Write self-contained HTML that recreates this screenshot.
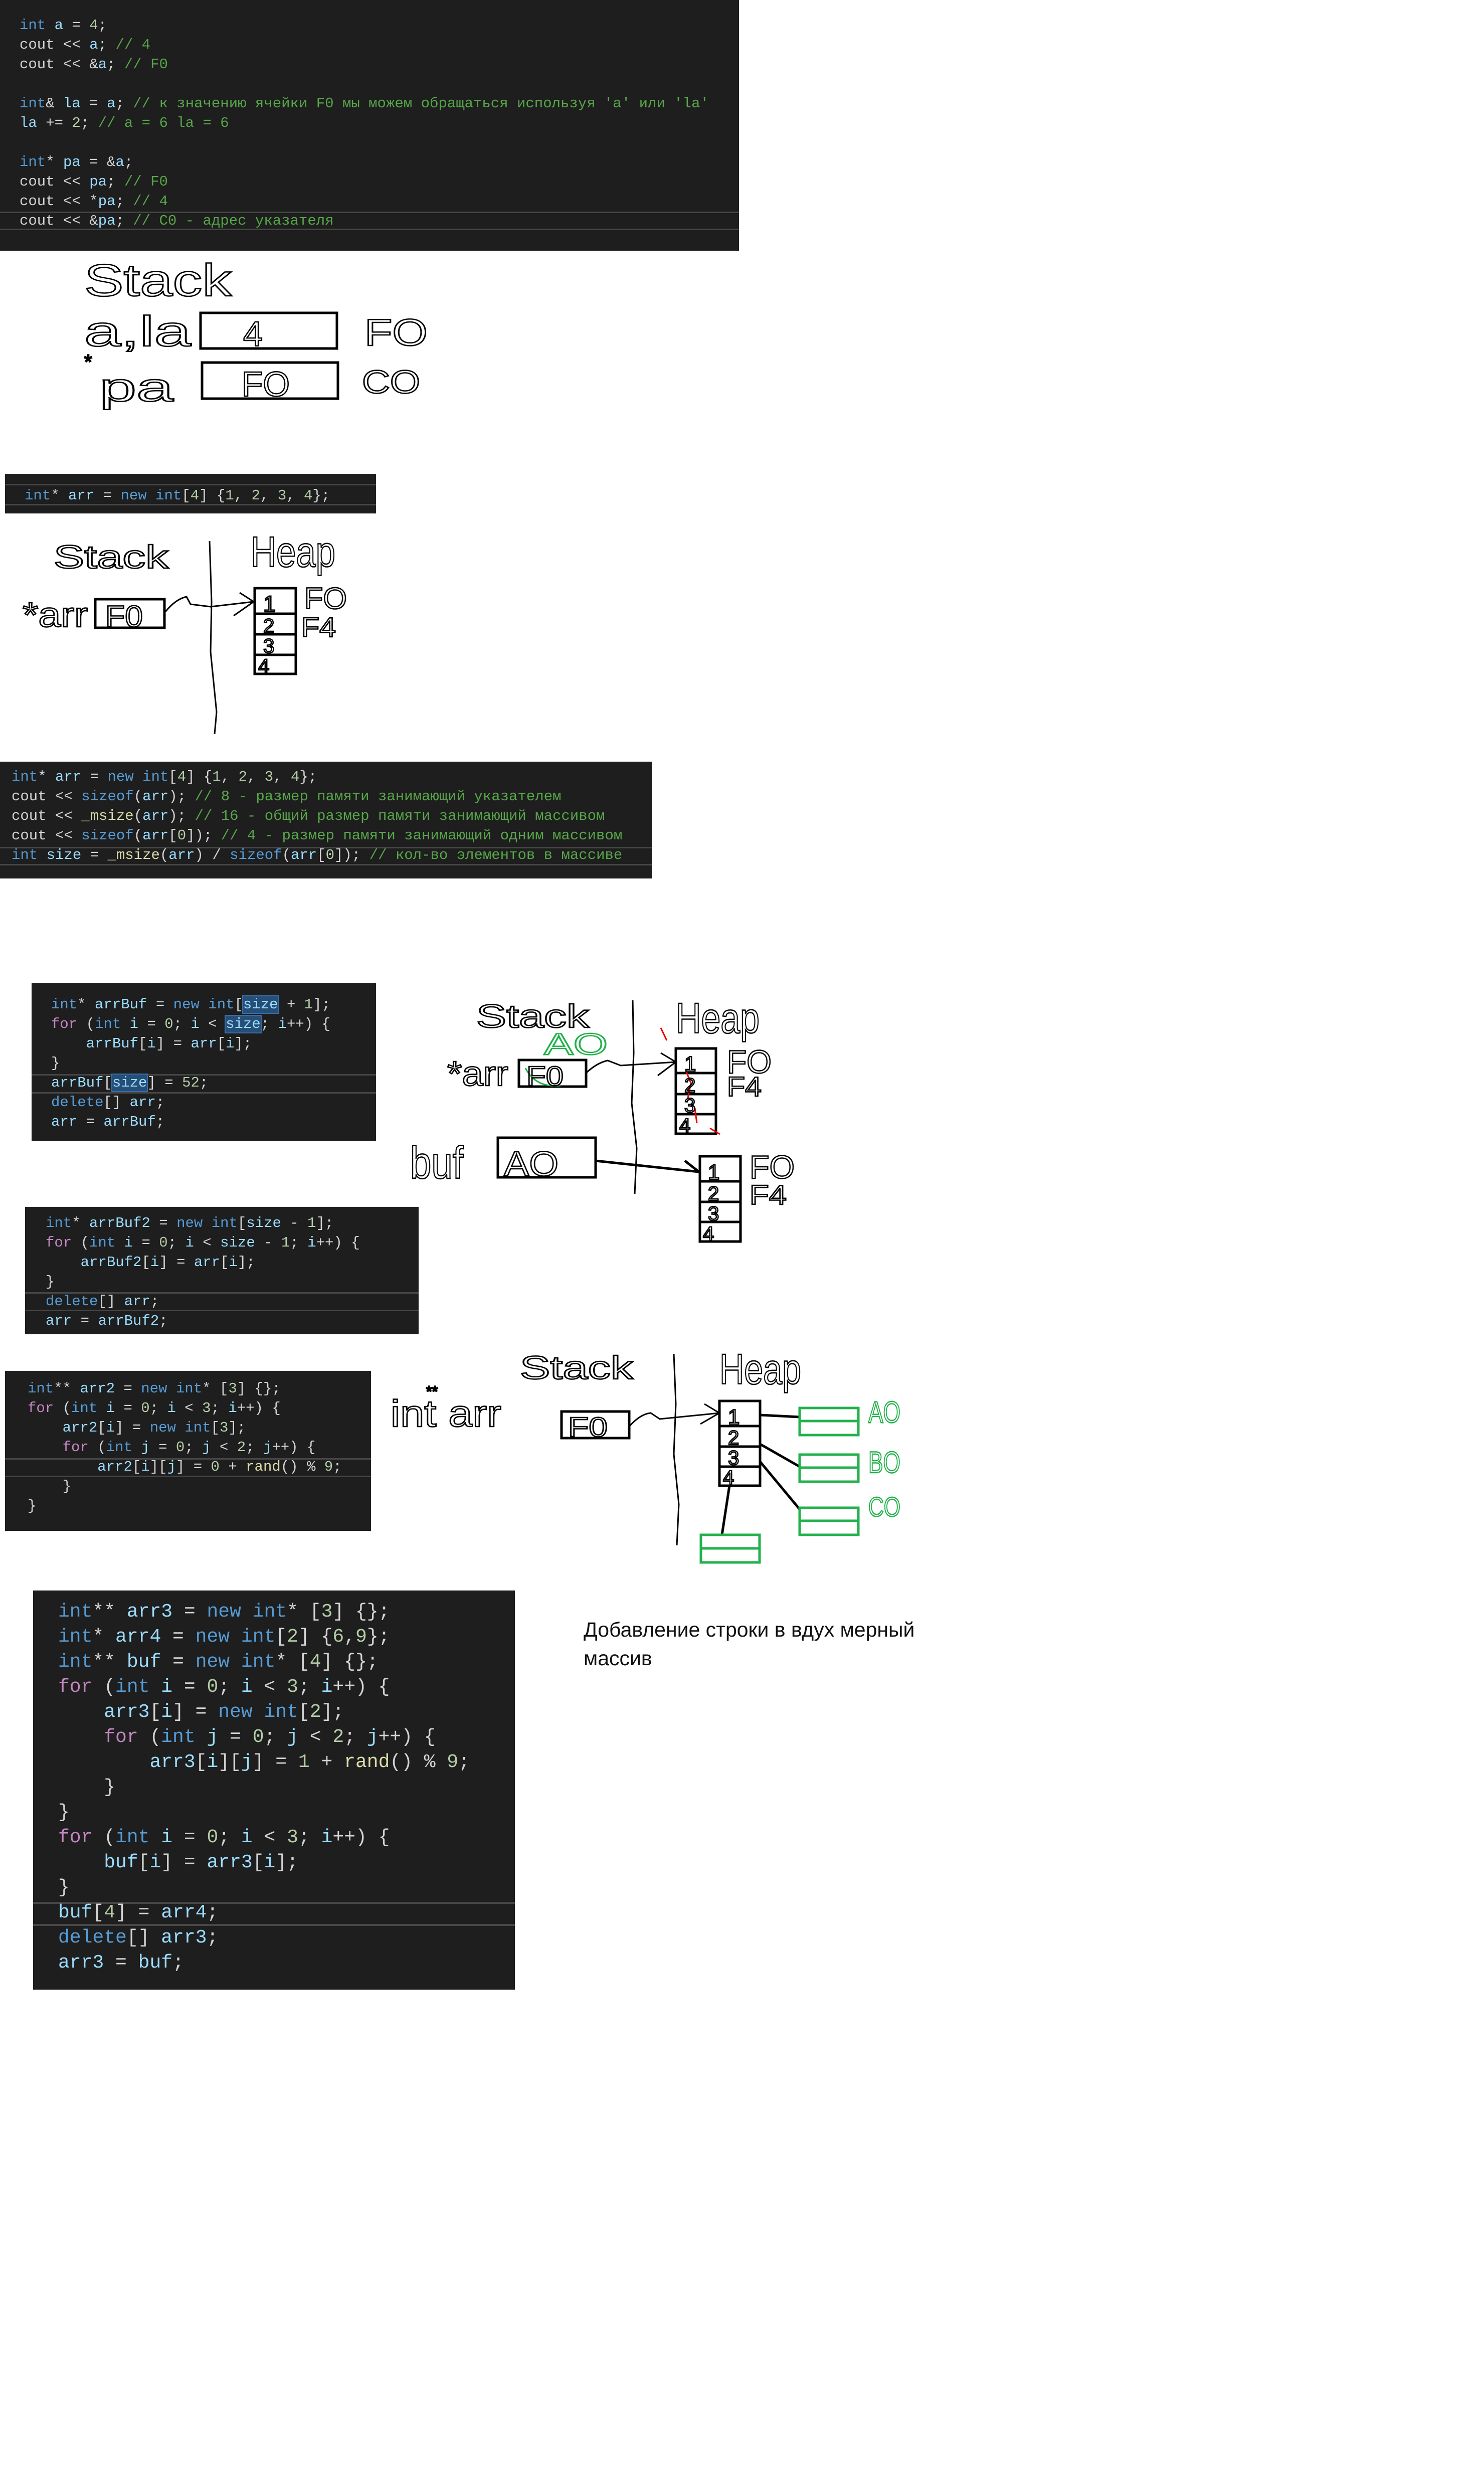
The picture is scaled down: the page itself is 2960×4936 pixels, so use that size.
<!DOCTYPE html>
<html><head><meta charset="utf-8">
<style>
html,body{margin:0;padding:0;background:#fff;}
body{width:2960px;height:4936px;position:relative;overflow:hidden;}
.blk{position:absolute;background:#1e1e1e;}
.blk pre{position:absolute;margin:0;font-family:"Liberation Mono","DejaVu Sans Mono",monospace;font-size:29px;line-height:39px;color:#d4d4d4;white-space:pre;}
.hl{position:absolute;left:0;right:0;height:3px;background:#464646;}
.k{color:#569cd6}.v{color:#9cdcfe}.c{color:#57a64a}.n{color:#b5cea8}.f{color:#dcdcaa}.p{color:#c586c0}
.s{background:#264f78;outline:2px solid #3a6ea5}
svg{position:absolute;left:0;top:0;}
.hw{font-family:"Liberation Sans Narrow","Liberation Sans",sans-serif;font-weight:normal;fill:none;stroke:#000;stroke-width:2.5;}
.hg{font-family:"Liberation Sans Narrow","Liberation Sans",sans-serif;fill:none;stroke:#22b14c;stroke-width:2.5;}
.ru{position:absolute;left:1164px;top:3222px;font-family:"Liberation Sans",sans-serif;font-size:41px;line-height:57px;color:#111;}
</style></head><body>

<div class="blk" style="left:0;top:0;width:1474px;height:500px;">
<div class="hl" style="top:422px"></div><div class="hl" style="top:456px"></div>
<pre style="left:39px;top:31px"><span class="k">int</span> <span class="v">a</span> = <span class="n">4</span>;
cout &lt;&lt; <span class="v">a</span>; <span class="c">// 4</span>
cout &lt;&lt; &amp;<span class="v">a</span>; <span class="c">// F0</span>

<span class="k">int</span>&amp; <span class="v">la</span> = <span class="v">a</span>; <span class="c">// к значению ячейки F0 мы можем обращаться используя 'a' или 'la'</span>
<span class="v">la</span> += <span class="n">2</span>; <span class="c">// a = 6 la = 6</span>

<span class="k">int</span>* <span class="v">pa</span> = &amp;<span class="v">a</span>;
cout &lt;&lt; <span class="v">pa</span>; <span class="c">// F0</span>
cout &lt;&lt; *<span class="v">pa</span>; <span class="c">// 4</span>
cout &lt;&lt; &amp;<span class="v">pa</span>; <span class="c">// C0 - адрес указателя</span></pre>
</div>

<div class="blk" style="left:10px;top:945px;width:740px;height:79px;">
<div class="hl" style="top:20px"></div><div class="hl" style="top:60px"></div>
<pre style="left:39px;top:24px"><span class="k">int</span>* <span class="v">arr</span> = <span class="k">new</span> <span class="k">int</span>[<span class="n">4</span>] {<span class="n">1</span>, <span class="n">2</span>, <span class="n">3</span>, <span class="n">4</span>};</pre>
</div>

<div class="blk" style="left:0;top:1519px;width:1300px;height:233px;">
<div class="hl" style="top:170px"></div><div class="hl" style="top:204px"></div>
<pre style="left:23px;top:11px"><span class="k">int</span>* <span class="v">arr</span> = <span class="k">new</span> <span class="k">int</span>[<span class="n">4</span>] {<span class="n">1</span>, <span class="n">2</span>, <span class="n">3</span>, <span class="n">4</span>};
cout &lt;&lt; <span class="k">sizeof</span>(<span class="v">arr</span>); <span class="c">// 8 - размер памяти занимающий указателем</span>
cout &lt;&lt; <span class="f">_msize</span>(<span class="v">arr</span>); <span class="c">// 16 - общий размер памяти занимающий массивом</span>
cout &lt;&lt; <span class="k">sizeof</span>(<span class="v">arr</span>[<span class="n">0</span>]); <span class="c">// 4 - размер памяти занимающий одним массивом</span>
<span class="k">int</span> <span class="v">size</span> = <span class="f">_msize</span>(<span class="v">arr</span>) / <span class="k">sizeof</span>(<span class="v">arr</span>[<span class="n">0</span>]); <span class="c">// кол-во элементов в массиве</span></pre>
</div>

<div class="blk" style="left:63px;top:1960px;width:687px;height:316px;">
<div class="hl" style="top:182px"></div><div class="hl" style="top:218px"></div>
<pre style="left:39px;top:24px"><span class="k">int</span>* <span class="v">arrBuf</span> = <span class="k">new</span> <span class="k">int</span>[<span class="v s">size</span> + <span class="n">1</span>];
<span class="p">for</span> (<span class="k">int</span> <span class="v">i</span> = <span class="n">0</span>; <span class="v">i</span> &lt; <span class="v s">size</span>; <span class="v">i</span>++) {
    <span class="v">arrBuf</span>[<span class="v">i</span>] = <span class="v">arr</span>[<span class="v">i</span>];
}
<span class="v">arrBuf</span>[<span class="v s">size</span>] = <span class="n">52</span>;
<span class="k">delete</span>[] <span class="v">arr</span>;
<span class="v">arr</span> = <span class="v">arrBuf</span>;</pre>
</div>

<div class="blk" style="left:50px;top:2407px;width:785px;height:254px;">
<div class="hl" style="top:170px"></div><div class="hl" style="top:205px"></div>
<pre style="left:41px;top:13px"><span class="k">int</span>* <span class="v">arrBuf2</span> = <span class="k">new</span> <span class="k">int</span>[<span class="v">size</span> - <span class="n">1</span>];
<span class="p">for</span> (<span class="k">int</span> <span class="v">i</span> = <span class="n">0</span>; <span class="v">i</span> &lt; <span class="v">size</span> - <span class="n">1</span>; <span class="v">i</span>++) {
    <span class="v">arrBuf2</span>[<span class="v">i</span>] = <span class="v">arr</span>[<span class="v">i</span>];
}
<span class="k">delete</span>[] <span class="v">arr</span>;
<span class="v">arr</span> = <span class="v">arrBuf2</span>;</pre>
</div>

<div class="blk" style="left:10px;top:2734px;width:730px;height:319px;">
<div class="hl" style="top:174px"></div><div class="hl" style="top:209px"></div>
<pre style="left:45px;top:16px"><span class="k">int</span>** <span class="v">arr2</span> = <span class="k">new</span> <span class="k">int</span>* [<span class="n">3</span>] {};
<span class="p">for</span> (<span class="k">int</span> <span class="v">i</span> = <span class="n">0</span>; <span class="v">i</span> &lt; <span class="n">3</span>; <span class="v">i</span>++) {
    <span class="v">arr2</span>[<span class="v">i</span>] = <span class="k">new</span> <span class="k">int</span>[<span class="n">3</span>];
    <span class="p">for</span> (<span class="k">int</span> <span class="v">j</span> = <span class="n">0</span>; <span class="v">j</span> &lt; <span class="n">2</span>; <span class="v">j</span>++) {
        <span class="v">arr2</span>[<span class="v">i</span>][<span class="v">j</span>] = <span class="n">0</span> + <span class="f">rand</span>() % <span class="n">9</span>;
    }
}</pre>
</div>

<div class="blk" style="left:66px;top:3172px;width:961px;height:796px;">
<div class="hl" style="top:621px;height:4px"></div><div class="hl" style="top:665px;height:4px"></div>
<pre style="left:50px;top:18px;font-size:38px;line-height:50px;"><span class="k">int</span>** <span class="v">arr3</span> = <span class="k">new</span> <span class="k">int</span>* [<span class="n">3</span>] {};
<span class="k">int</span>* <span class="v">arr4</span> = <span class="k">new</span> <span class="k">int</span>[<span class="n">2</span>] {<span class="n">6</span>,<span class="n">9</span>};
<span class="k">int</span>** <span class="v">buf</span> = <span class="k">new</span> <span class="k">int</span>* [<span class="n">4</span>] {};
<span class="p">for</span> (<span class="k">int</span> <span class="v">i</span> = <span class="n">0</span>; <span class="v">i</span> &lt; <span class="n">3</span>; <span class="v">i</span>++) {
    <span class="v">arr3</span>[<span class="v">i</span>] = <span class="k">new</span> <span class="k">int</span>[<span class="n">2</span>];
    <span class="p">for</span> (<span class="k">int</span> <span class="v">j</span> = <span class="n">0</span>; <span class="v">j</span> &lt; <span class="n">2</span>; <span class="v">j</span>++) {
        <span class="v">arr3</span>[<span class="v">i</span>][<span class="v">j</span>] = <span class="n">1</span> + <span class="f">rand</span>() % <span class="n">9</span>;
    }
}
<span class="p">for</span> (<span class="k">int</span> <span class="v">i</span> = <span class="n">0</span>; <span class="v">i</span> &lt; <span class="n">3</span>; <span class="v">i</span>++) {
    <span class="v">buf</span>[<span class="v">i</span>] = <span class="v">arr3</span>[<span class="v">i</span>];
}
<span class="v">buf</span>[<span class="n">4</span>] = <span class="v">arr4</span>;
<span class="k">delete</span>[] <span class="v">arr3</span>;
<span class="v">arr3</span> = <span class="v">buf</span>;</pre>
</div>

<div class="ru">Добавление строки в вдух мерный<br>массив</div>

<svg width="2960" height="4936" viewBox="0 0 2960 4936">
<g fill="none" stroke="#000" stroke-width="5">
<rect x="400" y="624" width="272" height="71"/>
<rect x="403" y="723" width="271" height="72"/>
<path d="M418 1079 L422 1200 L420 1300 L428 1380 L432 1420 L428 1464" stroke-width="3"/>
<rect x="190" y="1195" width="138" height="57"/>
<path d="M330 1220 Q350 1195 372 1190 L380 1205 L420 1210 L506 1200 M478 1182 L506 1200 L466 1228" stroke-width="3"/>
<rect x="508" y="1173" width="82" height="171"/>
<path d="M508 1224 H590 M508 1265 H590 M508 1306 H590"/>
<path d="M1262 1995 L1264 2100 L1260 2200 L1270 2290 L1266 2381" stroke-width="3"/>
<rect x="1035" y="2114" width="134" height="53"/>
<path d="M1169 2140 Q1190 2120 1212 2115 L1238 2125 L1348 2118 M1318 2100 L1348 2118 L1312 2145" stroke-width="3"/>
<rect x="1348" y="2091" width="80" height="170"/>
<path d="M1348 2140 H1428 M1348 2182 H1428 M1348 2222 H1428"/>
<rect x="993" y="2269" width="195" height="79"/>
<path d="M1188 2315 L1394 2337 M1366 2315 L1394 2337"/>
<rect x="1396" y="2306" width="81" height="170"/>
<path d="M1396 2356 H1477 M1396 2397 H1477 M1396 2437 H1477"/>
<path d="M1344 2700 L1348 2800 L1344 2900 L1354 3000 L1350 3082" stroke-width="3"/>
<rect x="1120" y="2815" width="135" height="53"/>
<path d="M1255 2845 Q1277 2820 1298 2818 L1316 2830 L1435 2818 M1405 2800 L1435 2818 L1397 2840" stroke-width="3"/>
<rect x="1435" y="2794" width="81" height="169"/>
<path d="M1435 2844 H1516 M1435 2885 H1516 M1435 2925 H1516"/>
<path d="M1516 2822 L1595 2826 M1516 2880 L1595 2925 M1516 2915 L1595 3010 M1455 2963 L1440 3061"/>
</g>
<g fill="none" stroke="#22b14c" stroke-width="5">
<rect x="1595" y="2808" width="117" height="54"/><path d="M1595 2834 H1712"/>
<rect x="1595" y="2901" width="117" height="54"/><path d="M1595 2927 H1712"/>
<rect x="1595" y="3007" width="117" height="54"/><path d="M1595 3033 H1712"/>
<rect x="1398" y="3061" width="117" height="55"/><path d="M1398 3088 H1515"/>
<path d="M1048 2130 Q1068 2170 1118 2165" stroke-width="3"/>
</g>
<g stroke="#e00" stroke-width="3" fill="none">
<path d="M1318 2050 L1330 2075 M1368 2135 L1378 2160 L1372 2190 M1386 2210 L1390 2240 M1416 2250 L1436 2262"/>
</g>
<g class="hw">
<text x="168" y="590" font-size="90" textLength="294" lengthAdjust="spacingAndGlyphs">Stack</text>
<text x="168" y="690" font-size="85" textLength="213" lengthAdjust="spacingAndGlyphs">a,la</text>
<text x="485" y="690" font-size="70">4</text>
<text x="482" y="790" font-size="70" textLength="96" lengthAdjust="spacingAndGlyphs">FO</text>
<text x="727" y="689" font-size="75" textLength="126" lengthAdjust="spacingAndGlyphs">FO</text>
<text x="722" y="784" font-size="65" textLength="116" lengthAdjust="spacingAndGlyphs">CO</text>
<text x="168" y="735" font-size="40">*</text>
<text x="198" y="800" font-size="80" textLength="148" lengthAdjust="spacingAndGlyphs">pa</text>
<text x="107" y="1133" font-size="65" textLength="229" lengthAdjust="spacingAndGlyphs">Stack</text>
<text x="500" y="1130" font-size="85" textLength="169" lengthAdjust="spacingAndGlyphs">Heap</text>
<text x="45" y="1250" font-size="70" textLength="130" lengthAdjust="spacingAndGlyphs">*arr</text>
<text x="210" y="1250" font-size="60" textLength="75" lengthAdjust="spacingAndGlyphs">F0</text>
<text x="525" y="1220" font-size="45">1</text><text x="525" y="1262" font-size="40">2</text>
<text x="525" y="1302" font-size="40">3</text><text x="515" y="1342" font-size="40">4</text>
<text x="607" y="1214" font-size="60" textLength="85" lengthAdjust="spacingAndGlyphs">FO</text>
<text x="601" y="1270" font-size="55" textLength="69" lengthAdjust="spacingAndGlyphs">F4</text>
<text x="950" y="2049" font-size="65" textLength="225" lengthAdjust="spacingAndGlyphs">Stack</text>
<text x="1348" y="2060" font-size="85" textLength="167" lengthAdjust="spacingAndGlyphs">Heap</text>
<text x="892" y="2165" font-size="70" textLength="122" lengthAdjust="spacingAndGlyphs">*arr</text>
<text x="1050" y="2165" font-size="55" textLength="74" lengthAdjust="spacingAndGlyphs">F0</text>
<text x="1365" y="2136" font-size="42">1</text><text x="1365" y="2178" font-size="40">2</text>
<text x="1365" y="2218" font-size="40">3</text><text x="1355" y="2258" font-size="40">4</text>
<text x="1450" y="2140" font-size="65" textLength="89" lengthAdjust="spacingAndGlyphs">FO</text>
<text x="1450" y="2186" font-size="55" textLength="69" lengthAdjust="spacingAndGlyphs">F4</text>
<text x="818" y="2350" font-size="90" textLength="106" lengthAdjust="spacingAndGlyphs">buf</text>
<text x="1005" y="2345" font-size="70" textLength="109" lengthAdjust="spacingAndGlyphs">AO</text>
<text x="1412" y="2352" font-size="42">1</text><text x="1412" y="2394" font-size="40">2</text>
<text x="1412" y="2434" font-size="40">3</text><text x="1402" y="2474" font-size="40">4</text>
<text x="1495" y="2350" font-size="65" textLength="90" lengthAdjust="spacingAndGlyphs">FO</text>
<text x="1495" y="2402" font-size="55" textLength="74" lengthAdjust="spacingAndGlyphs">F4</text>
<text x="1037" y="2750" font-size="65" textLength="226" lengthAdjust="spacingAndGlyphs">Stack</text>
<text x="1435" y="2760" font-size="85" textLength="163" lengthAdjust="spacingAndGlyphs">Heap</text>
<text x="779" y="2845" font-size="75" textLength="221" lengthAdjust="spacingAndGlyphs">int arr</text>
<text x="850" y="2785" font-size="30">**</text>
<text x="1133" y="2865" font-size="55" textLength="79" lengthAdjust="spacingAndGlyphs">F0</text>
<text x="1452" y="2840" font-size="42">1</text><text x="1452" y="2881" font-size="40">2</text>
<text x="1452" y="2921" font-size="40">3</text><text x="1442" y="2960" font-size="40">4</text>
</g>
<g class="hg">
<text x="1085" y="2103" font-size="60" textLength="127" lengthAdjust="spacingAndGlyphs">AO</text>
<text x="1732" y="2837" font-size="60" textLength="64" lengthAdjust="spacingAndGlyphs">AO</text>
<text x="1732" y="2937" font-size="60" textLength="64" lengthAdjust="spacingAndGlyphs">BO</text>
<text x="1732" y="3024" font-size="55" textLength="64" lengthAdjust="spacingAndGlyphs">CO</text>
</g>
</svg>
</body></html>
